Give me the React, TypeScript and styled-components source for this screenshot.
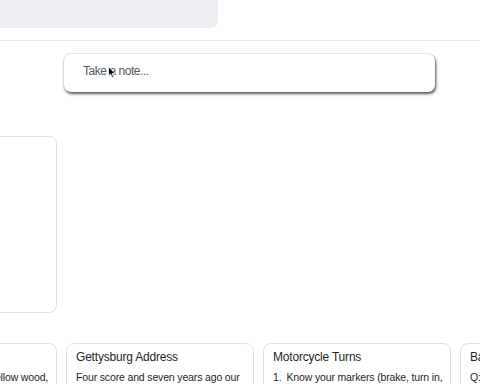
import React from "react";
import styled, { createGlobalStyle } from "styled-components";

const GlobalStyle = createGlobalStyle`
  html, body {
    margin: 0;
    padding: 0;
    background: #ffffff;
  }
  body {
    width: 480px;
    height: 384px;
    overflow: hidden;
    font-family: "Liberation Sans", Arial, Helvetica, sans-serif;
    color: #202124;
  }
`;

const Page = styled.div`
  width: 480px;
  height: 384px;
  overflow: hidden;
  display: flex;
  flex-direction: column;
`;

const Header = styled.header`
  height: 40px;
  flex: none;
  border-bottom: 1px solid #e6e6e6;
  display: flex;
  align-items: flex-start;
`;

const SearchBar = styled.div`
  width: 218px;
  height: 28px;
  background: #eceef1;
  border-bottom-right-radius: 7px;
`;

const Main = styled.main`
  display: flex;
  flex-direction: column;
  padding-top: 13px;
`;

const Composer = styled.div`
  position: relative;
  margin-left: 64px;
  width: 371px;
  height: 38px;
  box-sizing: border-box;
  border-radius: 7px;
  background: #fff;
  box-shadow: 1px 2px 3px 0 rgba(0, 0, 0, 0.65), 0 0 2px rgba(0, 0, 0, 0.25);
  display: flex;
  align-items: center;
  padding: 0 0 4px 19px;
`;

const Placeholder = styled.span`
  font-size: 12px;
  color: #55585c;
  letter-spacing: -0.45px;
`;

const Cursor = styled.svg`
  position: absolute;
  left: 44px;
  top: 12px;
`;

const Grid = styled.div<{ $top: number }>`
  display: flex;
  gap: 9px;
  margin-left: -131px;
  margin-top: ${(p) => p.$top}px;
`;

const Card = styled.div<{ $height?: number }>`
  flex: none;
  width: 188px;
  box-sizing: border-box;
  height: ${(p) => (p.$height ? `${p.$height}px` : "auto")};
  border: 1px solid #e0e0e0;
  border-radius: 8px;
  background: #fff;
  padding: 5px 9px 10px;
  display: flex;
  flex-direction: column;
  gap: 5px;
  overflow: hidden;
`;

const Title = styled.div`
  font-size: 12px;
  line-height: 16px;
  letter-spacing: -0.2px;
  color: #1f1f1f;
  white-space: nowrap;
`;

const Body = styled.div`
  font-size: 10.5px;
  line-height: 15px;
  letter-spacing: -0.15px;
  color: #1f1f1f;
  white-space: nowrap;
`;

const ListItem = styled.div`
  display: flex;
  gap: 5px;
`;

export default function App() {
  return (
    <>
      <GlobalStyle />
      <Page>
        <Header>
          <SearchBar />
        </Header>
        <Main>
          <Composer>
            <Placeholder>Take a note...</Placeholder>
            <Cursor width="8" height="13" viewBox="0 0 8 13">
              <path
                d="M0.5 0.5 L0.5 10 L2.6 8 L4.2 11.8 L5.6 11.2 L4.1 7.6 L7 7.6 Z"
                fill="#000"
                stroke="#fff"
                strokeWidth="0.8"
              />
            </Cursor>
          </Composer>
          <Grid $top={44}>
            <Card $height={177} />
          </Grid>
          <Grid $top={30}>
            <Card>
              <Title>The Road Not Taken</Title>
              <Body>Two roads diverged in a yellow wood,</Body>
            </Card>
            <Card>
              <Title>Gettysburg Address</Title>
              <Body>Four score and seven years ago our</Body>
            </Card>
            <Card>
              <Title>Motorcycle Turns</Title>
              <Body>
                <ListItem>
                  <span>1.</span>
                  <span>Know your markers (brake, turn in,</span>
                </ListItem>
              </Body>
            </Card>
            <Card>
              <Title>Basic Questions</Title>
              <Body>Q: What is the capital of France?</Body>
            </Card>
          </Grid>
        </Main>
      </Page>
    </>
  );
}
